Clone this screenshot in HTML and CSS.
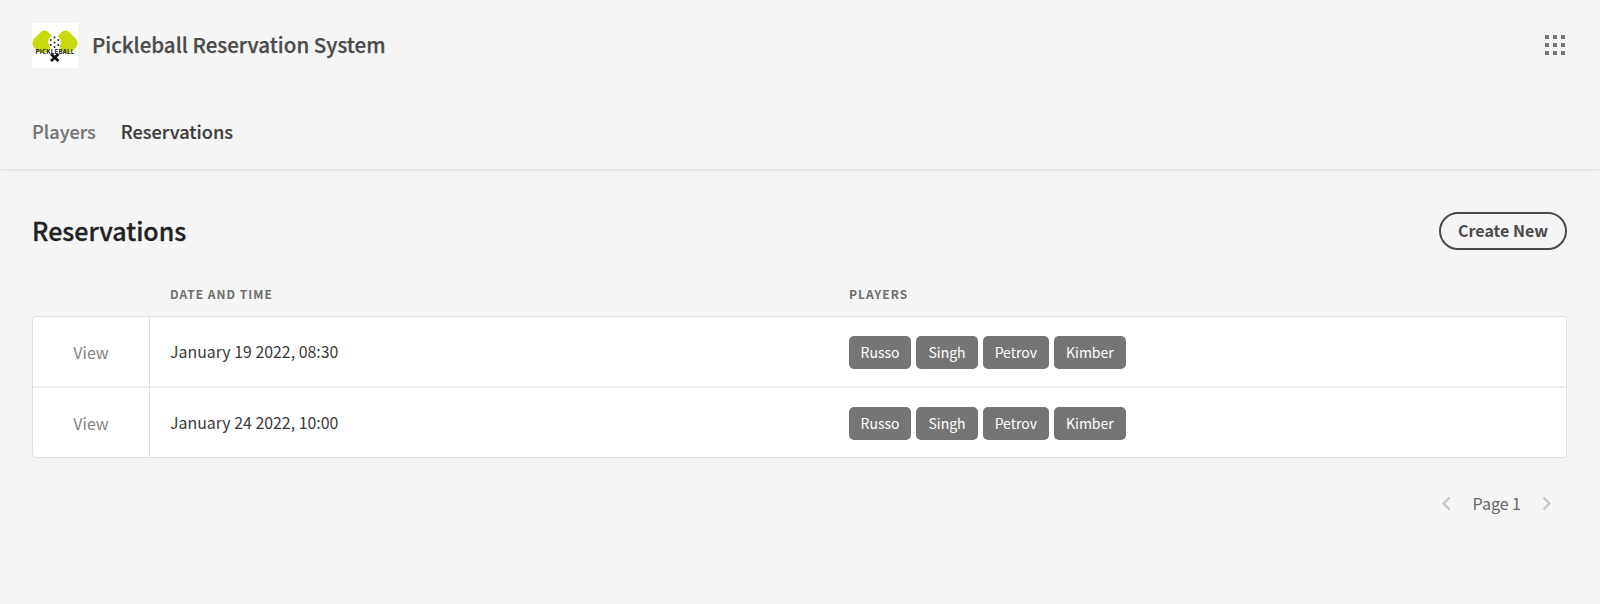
FILE: index.html
```html
<!DOCTYPE html>
<html lang="en">
<head>
<meta charset="utf-8">
<title>Pickleball Reservation System</title>
<link rel="stylesheet" href="styles.css">
</head>
<body>
<header class="topbar">
  <div class="brand-row">
    <div class="brand">
      <svg class="logo" width="46" height="45" viewBox="0 0 46 45" aria-hidden="true">
        <rect width="46" height="45" fill="#fff"/>
        <path d="M19 31 L26.500 38 M26.500 31 L19 38" stroke="#111" stroke-width="2.800" fill="none"/>
        <path d="M9 9 C11 7 14 7 16 9 C19 12 21 13 20 16 L18 25 C15 30 10 31 7 29 C3 26 0 23 0.500 19 C1 16 6 12 9 9 Z" fill="#c6da0c"/>
        <path d="M37 9 C35 7 32 7 30 9 C27 12 25 13 26 16 L28 25 C31 30 36 31 39 29 C43 26 46 23 45.500 19 C45 16 40 12 37 9 Z" fill="#c6da0c"/>
        <circle cx="22.500" cy="19" r="6.500" fill="#fff"/>
        <g fill="#222">
          <circle cx="22.500" cy="14.500" r="1"/><circle cx="18.700" cy="17" r="1"/><circle cx="26.300" cy="17" r="1"/>
          <circle cx="22.500" cy="19.500" r="1"/><circle cx="18.700" cy="22" r="1"/><circle cx="26.300" cy="22" r="1"/>
          <circle cx="22.500" cy="24" r="1"/>
        </g>
        <text class="logo-text" x="23" y="31" text-anchor="middle">PICKLEBALL</text>
      </svg>
      <span class="brand-name">Pickleball Reservation System</span>
    </div>
    <button class="apps" type="button" aria-label="Apps">
      <span></span><span></span><span></span><span></span><span></span><span></span><span></span><span></span><span></span>
    </button>
  </div>
  <nav class="tabs">
    <a class="tab" href="#">Players</a>
    <a class="tab tab-active" href="#">Reservations</a>
  </nav>
</header>
<main class="content">
  <div class="page-head">
    <h1 class="page-title">Reservations</h1>
    <button class="btn-create" type="button">Create New</button>
  </div>
  <div class="col-heads">
    <div class="col-action"></div>
    <div class="col-date">DATE AND TIME</div>
    <div class="col-players">PLAYERS</div>
  </div>
  <div class="table">
    <div class="row">
      <div class="cell-action"><a class="view" href="#">View</a></div>
      <div class="cell-date">January 19 2022, 08:30</div>
      <div class="cell-players">
        <span class="badge">Russo</span><span class="badge">Singh</span><span class="badge">Petrov</span><span class="badge">Kimber</span>
      </div>
    </div>
    <div class="row">
      <div class="cell-action"><a class="view" href="#">View</a></div>
      <div class="cell-date">January 24 2022, 10:00</div>
      <div class="cell-players">
        <span class="badge">Russo</span><span class="badge">Singh</span><span class="badge">Petrov</span><span class="badge">Kimber</span>
      </div>
    </div>
  </div>
  <div class="pager">
    <svg class="chev chev-prev" width="10" height="15" viewBox="0 0 10 15" aria-hidden="true"><path d="M8.500 1.500 L2.500 7.500 L8.500 13.500"/></svg>
    <span class="page-label">Page 1</span>
    <svg class="chev" width="10" height="15" viewBox="0 0 10 15" aria-hidden="true"><path d="M1.500 1.500 L7.500 7.500 L1.500 13.500"/></svg>
  </div>
</main>
</body>
</html>
```
FILE: styles.css
```css
* { box-sizing: border-box; }
html, body { margin: 0; padding: 0; }
body {
  height: 604px;
  background: #f5f5f5;
  font-family: "Noto Sans CJK SC", "Noto Sans", sans-serif;
  color: #333;
  overflow: hidden;
}
.topbar {
  height: 169px;
  padding: 23px 32px 0 32px;
  background: #f5f5f5;
  box-shadow: 0 1px 3px rgba(0, 0, 0, 0.12);
  position: relative;
}
.brand-row {
  display: flex;
  justify-content: space-between;
  align-items: center;
  height: 46px;
}
.brand { display: flex; align-items: center; gap: 14px; }
.logo { display: block; margin-bottom: 1px; }
.logo-text { font-size: 6px; font-weight: 700; fill: #111; letter-spacing: 0.3px; }
.brand-name {
  font-size: 20.5px;
  line-height: 28px;
  font-weight: 500;
  -webkit-text-stroke: 0.25px currentColor;
  color: #4a4a4a;
  padding-bottom: 5px;
}
.apps {
  display: grid;
  grid-template-columns: repeat(3, 4px);
  gap: 4px;
  padding: 0;
  margin: 0 3px 3px 0;
  border: 0;
  background: none;
}
.apps span { width: 4px; height: 4px; background: #757575; }
.tabs { display: flex; gap: 25px; margin-top: 48px; }
.tab {
  font-size: 18.2px;
  line-height: 28px;
  font-weight: 500;
  -webkit-text-stroke: 0.2px currentColor;
  color: #757575;
  text-decoration: none;
}
.tab-active { color: #3d3d3d; }
.content { padding: 0 33px 0 32px; }
.page-head {
  display: flex;
  justify-content: space-between;
  align-items: center;
  padding-top: 43px;
  height: 81px;
}
.page-title {
  margin: 0;
  font-size: 25px;
  line-height: 32px;
  font-weight: 500;
  -webkit-text-stroke: 0.3px currentColor;
  color: #222;
  padding-bottom: 2px;
}
.btn-create {
  width: 128px;
  height: 38px;
  border: 2px solid #4a4a4a;
  border-radius: 19px;
  background: transparent;
  font-family: inherit;
  font-size: 16px;
  font-weight: 700;
  color: #4a4a4a;
  padding: 0 0 3px;
}
.col-heads {
  display: grid;
  grid-template-columns: 138px 679px 1fr;
  margin-top: 23px;
  padding-top: 11px;
  height: 43px;
  font-size: 12px;
  line-height: 20px;
  font-weight: 700;
  letter-spacing: 1px;
  color: #6e6e6e;
}
.table {
  border: 1px solid #e0e0e0;
  border-radius: 4px;
  background: #fff;
}
.row {
  display: grid;
  grid-template-columns: 117px 698.5px 1fr;
  height: 69px;
  align-items: stretch;
}
.row + .row { border-top: 2px solid #eee; height: 71px; }
.cell-action {
  display: flex;
  align-items: center;
  justify-content: center;
  border-right: 1px solid #e0e0e0;
}
.view { font-size: 16px; color: #838383; text-decoration: none; }
.cell-date {
  display: flex;
  align-items: center;
  padding-left: 20px;
  font-size: 15.9px;
  color: #3a3a3a;
}
.cell-players {
  display: flex;
  align-items: center;
  gap: 5px;
  padding-top: 1px;
}
.badge {
  display: block;
  height: 33px;
  padding: 0 12px;
  border-radius: 5px;
  background: #757575;
  color: #fff;
  font-size: 14px;
  line-height: 32px;
}
.pager {
  display: flex;
  justify-content: flex-end;
  align-items: center;
  gap: 21px;
  margin-top: 32px;
  padding-right: 15px;
  height: 26px;
}
.chev { fill: none; stroke: #c4c4c4; stroke-width: 2; }
.chev-prev { margin-right: 1px; }
.page-label { font-size: 16px; color: #666; }
```
